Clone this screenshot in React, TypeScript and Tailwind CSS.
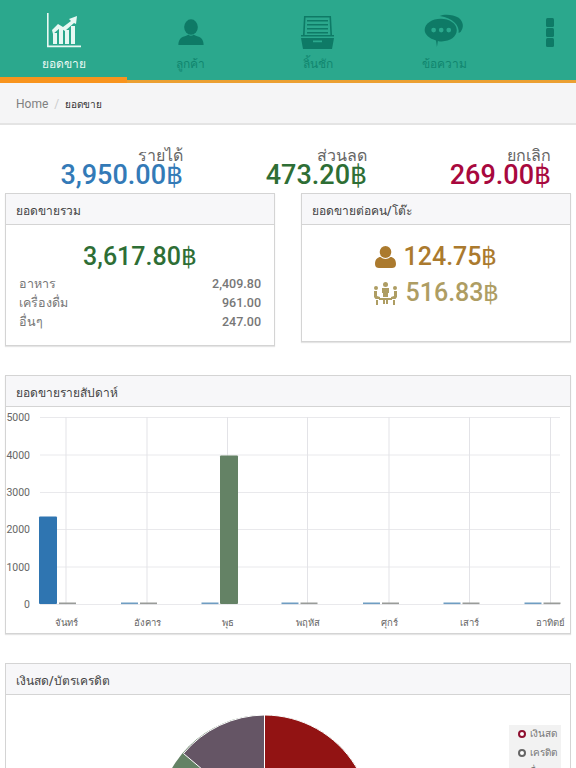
import React from "react";

const font = "font-['Roboto','Noto_Sans',sans-serif]";

function ChartIcon() {
  return (
    <svg width="36" height="36" viewBox="0 0 36 36" className="text-[#e8f8f3]" fill="currentColor">
      <path d="M1 0h1.600v32.600H35v1.600H1z" />
      <rect x="7" y="20" width="4" height="11" />
      <rect x="13" y="15" width="4" height="16" />
      <rect x="19" y="17" width="4" height="14" />
      <rect x="25" y="13" width="4" height="18" />
      <path d="M6 17l6-6 5 3 8-6-2-2 8-3-1 8-2-1-9 8-5-3-7 6z" />
    </svg>
  );
}
function PersonIcon() {
  return (
    <svg width="26" height="27" viewBox="0 0 28 30" fill="#0e7a66">
      <ellipse cx="14" cy="9" rx="7.600" ry="8.600" />
      <path d="M0 29c0-6 3-9 8-10l3-1.500c2 1.500 4 1.500 6 0l3 1.500c5 1 8 4 8 10z" />
    </svg>
  );
}
function DrawerIcon() {
  return (
    <svg width="33" height="33" viewBox="0 0 33 33" fill="#0e7a66">
      <path d="M3 0h27l1 19h-1.600L28.500 1.600h-24L3.600 19H2z" />
      <path d="M6 4h21v1.600H6zM6 8h21v1.600H6zM6 12h21v1.600H6zM6 16h21v1.600H6z" />
      <path d="M0 19h33v1.500H0z" />
      <path fillRule="evenodd" d="M0 22h33l-2 11H2zM12 24.500v1.800h9v-1.800z" />
    </svg>
  );
}
function ChatIcon() {
  return (
    <svg width="41" height="34" viewBox="0 0 42 36" fill="#0e7a66">
      <path d="M16 2c4-2 14-2 20 2 5 4 6 10 2 15l-2 1c1-8-6-16-20-18z" />
      <path fillRule="evenodd" d="M17 5c9 0 17 5 17 12s-7 12-16 12c-1 0-3 0-4-.5L13 35l-1-7C5 26 0 22 0 17 0 10 8 5 17 5zM9.500 14.500a2.500 2.500 0 100 5 2.500 2.500 0 000-5zm8 0a2.500 2.500 0 100 5 2.500 2.500 0 000-5zm8 0a2.500 2.500 0 100 5 2.500 2.500 0 000-5z" />
    </svg>
  );
}
function UserIcon({ c }: { c: string }) {
  return (
    <svg width="21" height="22" viewBox="0 0 21 22" fill={c}>
      <ellipse cx="10.500" cy="6" rx="5.800" ry="6" />
      <path d="M0 18c0-5 3-7 5.500-7 3 2.500 7 2.500 10 0 2.500 0 5.500 2 5.500 7 0 3-2 4-4 4H4c-2 0-4-1-4-4z" />
    </svg>
  );
}
function GroupIcon({ c }: { c: string }) {
  return (
    <svg width="25" height="23" viewBox="0 0 25 23" fill={c}>
      <circle cx="12.500" cy="2.500" r="2.500" />
      <path d="M9 6h7v5h-1v4h-5v-4H9z" />
      <circle cx="3" cy="6" r="2" />
      <circle cx="22" cy="6" r="2" />
      <path d="M1 9h3v5l3 1v2H2.500L1 15zM24 9h-3v5l-3 1v2h4.500l1.500-2z" />
      <rect x="6" y="16" width="13" height="2" />
      <path d="M3 18h2v5H3zM20 18h2v5h-2zM10 18h2v4h-2zM13 18h2v4h-2z" />
    </svg>
  );
}

function Tab({ label, icon, active, iconClass }: { label: string; icon: React.ReactNode; active?: boolean; iconClass?: string }) {
  return (
    <div className={active ? "w-[127px] h-[83px] border-b-[6px] border-[#f8941e] flex flex-col items-center" : "w-[127px] h-[83px] flex flex-col items-center"}>
      <div className={`h-[36px] mt-[13px] flex items-end justify-center ${iconClass ?? ""}`}>{icon}</div>
      <div className={active ? "mt-[5px] text-[12px] leading-[20px] font-medium text-[#e8f8f3]" : "mt-[5px] text-[12px] leading-[20px] text-[#11866f]"}>{label}</div>
    </div>
  );
}

function Stat({ label, value, color, width }: { label: string; value: string; color: string; width: string }) {
  return (
    <div className={`${width} text-right`}>
      <div className="text-[16px] leading-[20px] text-[#666]">{label}</div>
      <div className={`text-[27px] leading-[20px] font-medium mt-[-1px] ${color}`}>{value}</div>
    </div>
  );
}

function PanelHead({ title }: { title: string }) {
  return (
    <div className="h-[31px] bg-[#f7f7f9] border-b border-[#d4d4d4] px-[10px] pt-[3px] flex items-center text-[12px] font-medium text-[#444]">
      {title}
    </div>
  );
}

function Row({ a, b }: { a: string; b: string }) {
  return (
    <div className="flex justify-between h-[19px] items-center text-[12.5px] text-[#777]">
      <span>{a}</span>
      <span className="font-medium">{b}</span>
    </div>
  );
}

function BarChart() {
  const ys = [417.5, 455, 492.5, 529.5, 567, 604.5];
  const xs = [66, 147, 227.5, 307.5, 389, 469.5, 550.5];
  const labels = ["จันทร์", "อังคาร", "พุธ", "พฤหัส", "ศุกร์", "เสาร์", "อาทิตย์"];
  return (
    <svg width="564" height="226" viewBox="6 407 564 226" className="block">
      {ys.map((y, i) => (
        <g key={y}>
          <line x1="40" x2="560" y1={y} y2={y} stroke="#e9e9ec" strokeWidth="1" />
          <text x="30" y={y + 3.5} textAnchor="end" fontSize="10.5" fill="#666">{5000 - i * 1000}</text>
        </g>
      ))}
      {xs.map((x, i) => (
        <g key={x}>
          <line x1={x} x2={x} y1="417" y2="604.5" stroke="#e3e3e7" strokeWidth="1" />
          <text x={x} y="626" textAnchor="middle" fontSize="9.5" fill="#666">{labels[i]}</text>
          {i === 0 ? (
            <rect x="39" y="516.5" width="18" height="87.5" fill="#2f75b1" rx="1" />
          ) : (
            <rect x={x - 26} y="602.5" width="17" height="1.6" fill="#6f9dc2" />
          )}
          {i === 2 ? (
            <rect x="220" y="455.5" width="18" height="148.5" fill="#648265" rx="1" />
          ) : (
            <rect x={x - 7} y="602.5" width="17" height="1.6" fill="#999c99" />
          )}
        </g>
      ))}
    </svg>
  );
}

export default function App() {
  return (
    <div className={`${font} w-[576px] h-[768px] overflow-hidden bg-white`}>
      <div className="h-[83px] bg-[#2ba88d] border-b-[3px] border-[#eba032] flex items-start box-border">
        <Tab active label="ยอดขาย" icon={<ChartIcon />} />
        <Tab label="ลูกค้า" icon={<PersonIcon />} iconClass="pb-[3px]" />
        <Tab label="ลิ้นชัก" icon={<DrawerIcon />} />
        <Tab label="ข้อความ" icon={<ChatIcon />} iconClass="pb-[1px]" />
        <div className="flex-1 flex flex-col items-center gap-[1.5px] pt-[18px] pl-[16px]">
          <div className="w-[8px] h-[8.5px] rounded-[1.5px] bg-[#0e7a66]" />
          <div className="w-[8px] h-[8.5px] rounded-[1.5px] bg-[#0e7a66]" />
          <div className="w-[8px] h-[8.5px] rounded-[1.5px] bg-[#0e7a66]" />
        </div>
      </div>
      <div className="h-[42px] bg-[#f5f5f6] border-b-2 border-[#e4e4e4] px-[16px] pt-[2px] flex items-center text-[12px] box-border">
        <span className="text-[#808080]">Home</span>
        <span className="text-[#ccc] mx-[6px]">/</span>
        <span className="text-[#333] text-[10px] font-medium">ยอดขาย</span>
      </div>
      <div className="flex pt-[21px] h-[68px] box-border">
        <Stat width="w-[183px]" label="รายได้" value="3,950.00฿" color="text-[#337ab7]" />
        <Stat width="w-[184px]" label="ส่วนลด" value="473.20฿" color="text-[#2e6e35]" />
        <Stat width="w-[184px]" label="ยกเลิก" value="269.00฿" color="text-[#a8083e]" />
      </div>
      <div className="flex items-start pl-[5px] gap-[26px]">
        <div className="w-[270px] h-[153px] border border-[#d4d4d4] shadow-[0_1px_1px_rgba(0,0,0,0.1)]">
          <PanelHead title="ยอดขายรวม" />
          <div className="text-center text-[25px] leading-[30px] font-medium text-[#2e6e35] mt-[17px]">3,617.80฿</div>
          <div className="px-[13px] mt-[3px]">
            <Row a="อาหาร" b="2,409.80" />
            <Row a="เครื่องดื่ม" b="961.00" />
            <Row a="อื่นๆ" b="247.00" />
          </div>
        </div>
        <div className="w-[270px] h-[149px] border border-[#d4d4d4] shadow-[0_1px_1px_rgba(0,0,0,0.1)]">
          <PanelHead title="ยอดขายต่อคน/โต๊ะ" />
          <div className="flex items-center justify-center gap-[8px] mt-[17px] h-[30px] text-[25px] font-medium text-[#ab7a2e]">
            <UserIcon c="#ab7a2e" />
            <span>124.75฿</span>
          </div>
          <div className="flex items-center justify-center gap-[8px] mt-[6px] h-[30px] text-[25px] font-medium text-[#ae9d63]">
            <GroupIcon c="#ae9d63" />
            <span>516.83฿</span>
          </div>
        </div>
      </div>
      <div className="ml-[5px] mt-[29px] w-[566px] h-[259px] border border-[#d4d4d4] shadow-[0_1px_1px_rgba(0,0,0,0.1)]">
        <PanelHead title="ยอดขายรายสัปดาห์" />
        <BarChart />
      </div>
      <div className="ml-[5px] mt-[29px] w-[566px] h-[200px] border border-[#d4d4d4] relative overflow-hidden">
        <PanelHead title="เงินสด/บัตรเครดิต" />
        <svg width="564" height="168" viewBox="6 695 564 168" className="block">
          <circle cx="264.5" cy="822" r="107" fill="#648265" />
          <path d="M264.5 822V715A107 107 0 0 1 360 870z" fill="#921313" stroke="#fff" strokeWidth="1" />
          <path d="M264.5 822L183.5 753.5A107 107 0 0 1 264.5 715z" fill="#655565" stroke="#fff" strokeWidth="1" />
        </svg>
        <div className="absolute left-[503px] top-[61px] w-[52px] h-[60px] bg-[#f2f2f2] pl-[9px] text-[10px] text-[#777]">
          <div className="flex items-center gap-[4px] h-[19px] mt-[-1px]">
            <span className="w-[8px] h-[8px] rounded-full border-2 border-[#8e1030] bg-white" />
            <span>เงินสด</span>
          </div>
          <div className="flex items-center gap-[4px] h-[19px]">
            <span className="w-[8px] h-[8px] rounded-full border-2 border-[#666] bg-white" />
            <span>เครดิต</span>
          </div>
          <div className="flex items-center gap-[4px] h-[19px]">
            <span className="w-[8px] h-[8px] rounded-full border-2 border-[#666] bg-white" />
            <span>อื่นๆ</span>
          </div>
        </div>
      </div>
    </div>
  );
}
